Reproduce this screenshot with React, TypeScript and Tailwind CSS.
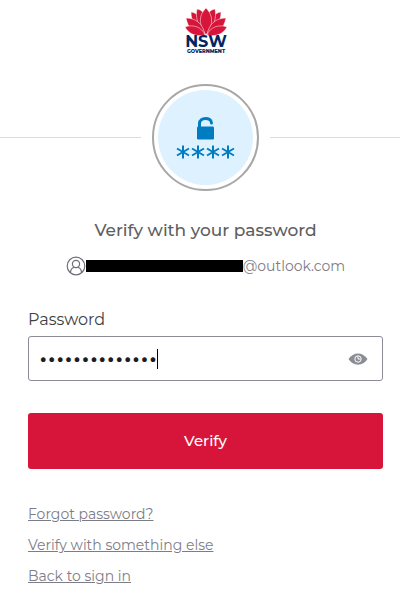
import { useState } from "react";

const NswLogo = () => {
  return (
    <svg
      className="w-[42px] h-[47px]"
      viewBox="0 0 42 47"
      role="img"
      aria-label="NSW Government"
    >
      <g fill="#d7153a" stroke="#ffffff" strokeWidth="0.5">
        <path d="M6 4 C13 5 18 11 20 25 C11 22 6 14 6 4Z" />
        <path d="M36 4 C29 5 24 11 22 25 C31 22 36 14 36 4Z" />
        <path d="M12 1 C18 2 21 7 21 14 L20 26 C13 18 10 9 12 1Z" />
        <path d="M30 1 C24 2 21 7 21 14 L22 26 C29 18 32 9 30 1Z" />
        <path d="M21 0 C28 7 29 16 21 27 C13 16 14 7 21 0Z" />
        <path d="M1 10 C10 10 18 15 20 27 C9 27 3 20 1 10Z" />
        <path d="M41 10 C32 10 24 15 22 27 C33 27 39 20 41 10Z" />
        <path d="M0 19 C8 16 17 19 20 27 C11 29 4 26 0 19Z" />
        <path d="M42 19 C34 16 25 19 22 27 C31 29 38 26 42 19Z" />
      </g>
      <g
        fill="#002664"
        textAnchor="middle"
        fontFamily="Montserrat, Inter, sans-serif"
      >
        <text x="21" y="39" fontSize="16" fontWeight="700">
          NSW
        </text>
        <text x="21" y="45" fontSize="5" fontWeight="800">
          GOVERNMENT
        </text>
      </g>
    </svg>
  );
};

const PasswordIcon = () => {
  return (
    <svg className="w-[60px] h-[44px]" viewBox="0 0 60 44" aria-hidden="true">
      <path
        d="M23.5 12 V7.5 C23.5 0.8 35.5 0.8 35.5 7"
        fill="none"
        stroke="#007dc1"
        strokeWidth="3"
        strokeLinecap="round"
      />
      <rect x="21" y="10.5" width="17" height="13" rx="1.2" fill="#007dc1" />
      <g stroke="#007dc1" strokeWidth="2">
        {[7, 22, 37, 52].map((x) => (
          <path
            key={x}
            d={`M${x} 29.5 V42.5 M${x - 6} 32.5 L${x + 6} 39.5 M${x - 6} 39.5 L${x + 6} 32.5`}
          />
        ))}
      </g>
    </svg>
  );
};

const UserIcon = () => {
  return (
    <svg
      className="size-5"
      viewBox="0 0 20 20"
      fill="none"
      stroke="#6e6e78"
      strokeWidth="1.2"
      aria-hidden="true"
    >
      <circle cx="10" cy="10" r="8.8" />
      <circle cx="10" cy="8" r="3.6" />
      <path d="M4.5 16.5 C4.5 13 6.5 11.8 8 11.2 M15.5 16.5 C15.5 13 13.5 11.8 12 11.2" />
    </svg>
  );
};

const EyeIcon = () => {
  return (
    <svg className="w-5 h-3" viewBox="0 0 20 12" aria-hidden="true">
      <path
        d="M0.5 6 C5 -1.5 15 -1.5 19.5 6 C15 13.5 5 13.5 0.5 6Z"
        fill="#8c8c96"
      />
      <circle cx="10" cy="6" r="3.2" fill="none" stroke="#ffffff" />
      <path d="M10 3.5 V6 H12.5" fill="none" stroke="#ffffff" />
    </svg>
  );
};

const links = ["Forgot password?", "Verify with something else", "Back to sign in"];

const App = () => {
  const [password, setPassword] = useState("abcdefghijklmn");
  const [visible, setVisible] = useState(false);

  return (
    <main className="overflow-hidden bg-white pl-7 pr-[17px] py-2 font-['Montserrat','Inter',sans-serif]">
      <header className="flex flex-col items-center">
        <NswLogo />
        <div className="-mx-7 mt-[29px] flex items-center gap-[11px] self-stretch">
          <div className="h-px flex-1 bg-[#dddddd]" />
          <div className="size-[107px] rounded-full border-2 border-[#a7a7a7] p-1">
            <div className="flex size-full items-center justify-center rounded-full bg-[#def1ff]">
              <PasswordIcon />
            </div>
          </div>
          <div className="h-px flex-1 bg-[#dddddd]" />
        </div>
      </header>

      <h1 className="mt-[27px] text-center text-[17px] leading-6 font-medium text-[#5e5e5e]">
        Verify with your password
      </h1>
      <div className="mt-3 flex items-center justify-center text-sm leading-6 text-[#7d7d87]">
        <UserIcon />
        <span className="h-3 w-[157px] bg-black" />
        <span>@outlook.com</span>
      </div>

      <form onSubmit={(e) => e.preventDefault()}>
        <label
          className="mt-[30px] block text-base leading-6 text-[#3f3f44]"
          htmlFor="password"
        >
          Password
        </label>
        <div className="mt-1 flex h-[45px] items-center rounded-[3px] border border-[#8c8c96] px-[10px]">
          <div className="flex min-w-0 flex-1 items-center">
            <input
              id="password"
              className="field-sizing-content max-w-full font-['Inter',sans-serif] text-[15px] leading-6 text-[#1d1d21] caret-transparent outline-none"
              type={visible ? "text" : "password"}
              value={password}
              onChange={(e) => setPassword(e.target.value)}
            />
            <span className="h-5 w-px bg-black" />
          </div>
          <button
            className="px-1 py-2"
            type="button"
            aria-label="Show password"
            onClick={() => setVisible(!visible)}
          >
            <EyeIcon />
          </button>
        </div>
        <button
          className="mt-8 h-14 w-full rounded-[3px] bg-[#d7153a] text-[15px] font-medium text-white"
          type="submit"
        >
          Verify
        </button>
      </form>

      <nav className="mt-[33px] flex flex-col items-start gap-[7px] text-sm leading-6 text-[#7d7d87]">
        {links.map((link) => (
          <a key={link} className="underline" href="#">
            {link}
          </a>
        ))}
      </nav>
    </main>
  );
};

export default App;
